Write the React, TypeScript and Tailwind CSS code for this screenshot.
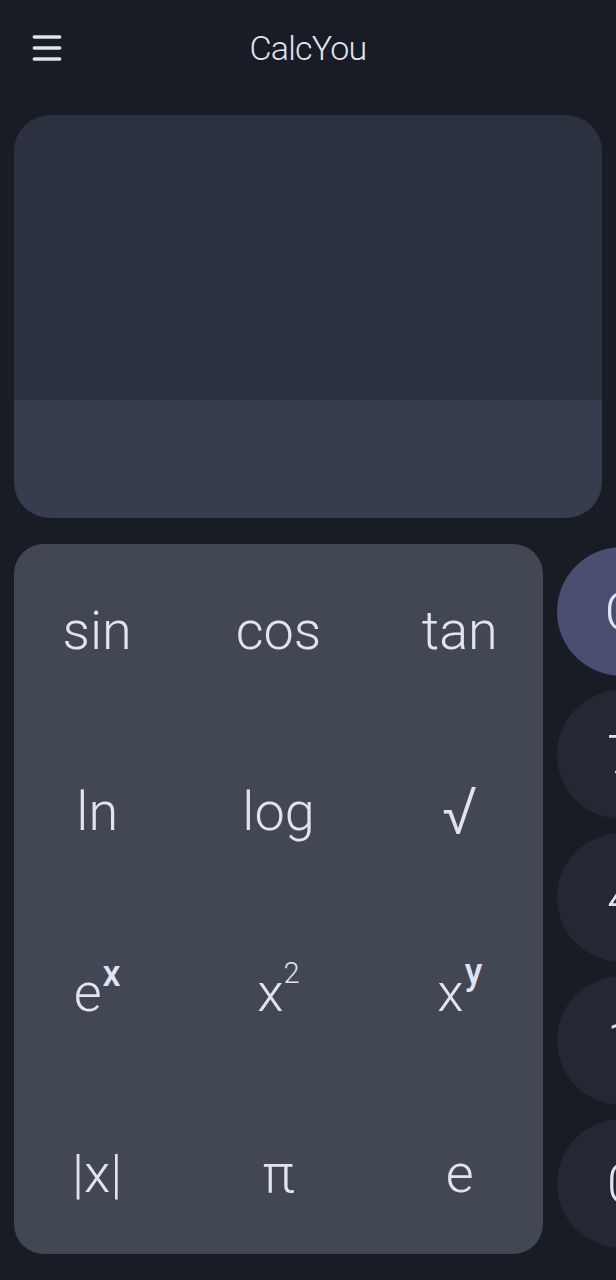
import { Menu } from "lucide-react";

const fnKeys: { base: string; sup?: string; supClass?: string; baseClass?: string }[] = [
  { base: "sin" },
  { base: "cos" },
  { base: "tan" },
  { base: "ln" },
  { base: "log" },
  { base: "√", baseClass: "text-[66px]" },
  { base: "e", sup: "x", supClass: "text-[36px] font-medium top-[-0.7em] ml-[1px]" },
  { base: "x", sup: "2", supClass: "text-[29px] font-light top-[-0.95em]" },
  { base: "x", sup: "y", supClass: "text-[36px] font-medium top-[-0.75em] ml-[1px]" },
  { base: "|x|" },
  { base: "π" },
  { base: "e" },
];

const sideKeys = [
  { label: "C", accent: true },
  { label: "7" },
  { label: "4" },
  { label: "1" },
  { label: "0" },
];

export default function App() {
  return (
    <div
      className="w-[616px] h-[1280px] overflow-hidden bg-[#191c24] text-[#dfe4f0]"
      style={{ fontFamily: "Roboto, 'Noto Sans', sans-serif" }}
    >
      {/* Top bar */}
      <header className="h-[96px] grid grid-cols-[1fr_auto_1fr] items-center px-[28px]">
        <button className="justify-self-start text-[#dfe4f0]">
          <Menu size={38} strokeWidth={2.2} />
        </button>
        <h1 className="text-[34px] font-light tracking-[-0.8px]">CalcYou</h1>
        <div />
      </header>

      {/* Display */}
      <div className="mx-[14px] mt-[19px] h-[403px] rounded-[36px] overflow-hidden flex flex-col">
        <div className="flex-1 bg-[#2b313e]" />
        <div className="h-[118px] bg-[#353d4f]" />
      </div>

      {/* Keypad */}
      <div className="mt-[26px] pl-[14px] flex gap-[14px]">
        <div className="w-[529px] h-[710px] shrink-0 rounded-[30px] bg-[#414753] grid grid-cols-3 grid-rows-[repeat(4,166px)] gap-x-[15px] gap-y-[15px] pt-[4px]">
          {fnKeys.map((k, i) => (
            <button key={i} className="flex items-center justify-center text-[54px] font-light leading-none">
              <span className={k.baseClass}>
                {k.base}
                {k.sup && <sup className={k.supClass}>{k.sup}</sup>}
              </span>
            </button>
          ))}
        </div>
        <div className="flex flex-col gap-[14px] mt-[3px] shrink-0">
          {sideKeys.map((k) => (
            <button
              key={k.label}
              className={`w-[130px] h-[129px] rounded-full flex items-center justify-center text-[54px] font-light leading-none ${
                k.accent ? "bg-[#4a4e70]" : "bg-[#232833]"
              }`}
            >
              {k.label}
            </button>
          ))}
        </div>
      </div>
    </div>
  );
}
